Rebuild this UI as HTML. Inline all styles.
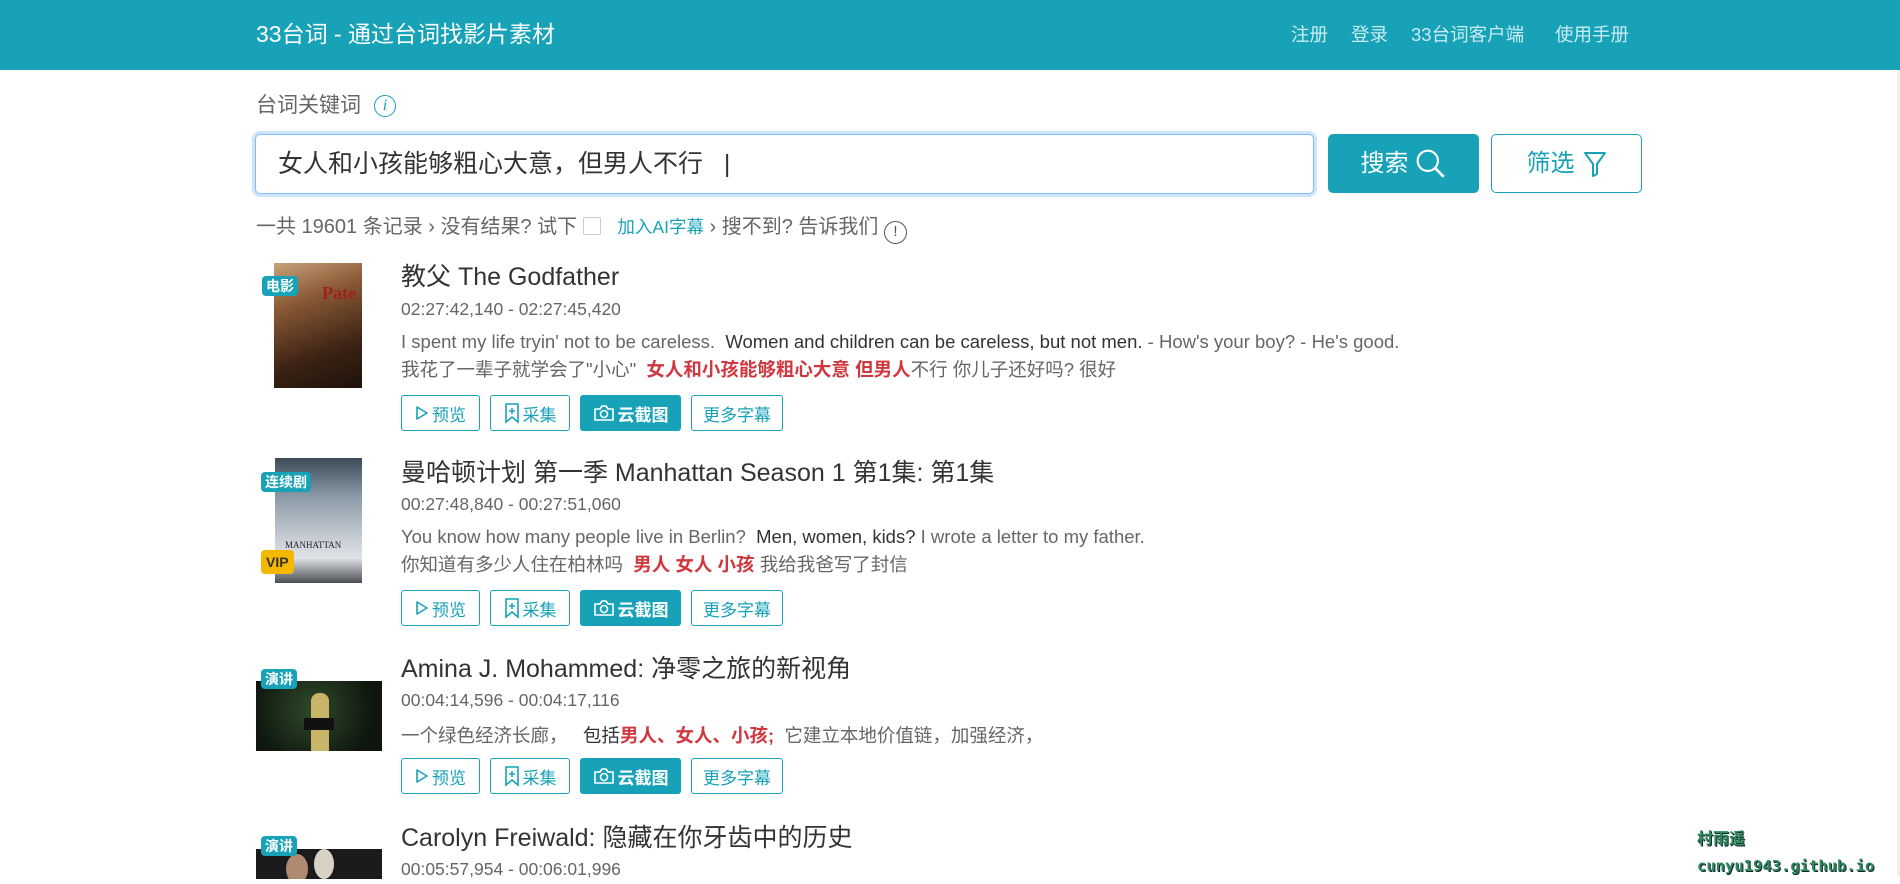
<!DOCTYPE html>
<html><head><meta charset="utf-8"><style>
*{margin:0;padding:0;box-sizing:border-box}
body{width:1900px;height:877px;overflow:hidden;background:#fff;font-family:"Liberation Sans","Noto Sans CJK SC",sans-serif;color:#333;position:relative}
.abs{position:absolute;white-space:nowrap;line-height:30px}
.hdr{position:absolute;left:0;top:0;width:1900px;height:70px;background:#17a2b8}
.nav{top:20px;font-size:18.5px;color:#c8ecf2}
.inp{left:255px;top:134px;width:1059px;height:60px;border:1px solid #80bdff;border-radius:5px;box-shadow:0 0 0 3px #cfe4ff}
.inp span{position:absolute;left:22px;top:14px;font-size:25px;line-height:30px;color:#333}
.btn1{left:1328px;top:134px;width:151px;height:59px;background:#17a2b8;border-radius:5px;color:#fff;font-size:24px;display:flex;align-items:center;justify-content:center;gap:6px}
.btn2{left:1491px;top:134px;width:151px;height:59px;border:1px solid #17a2b8;border-radius:5px;color:#17a2b8;font-size:24px;display:flex;align-items:center;justify-content:center;gap:8px}
.poster{position:absolute;overflow:hidden}
.badge{position:absolute;background:#17a2b8;color:#fff;font-size:14px;font-weight:bold;padding:1px 4px;border-radius:4px;line-height:18px}
.ti{font-size:25px;color:#333}
.tm{font-size:17.5px;color:#666}
.en{font-size:18.5px;color:#666}
.en b{font-weight:normal;color:#333}
.zh{font-size:18.5px;color:#666}
.zh b{color:#d0383f}
.btns{position:absolute;display:flex;gap:10px}
.b{height:36px;border:1px solid #17a2b8;border-radius:3px;color:#17a2b8;font-size:17px;display:flex;align-items:center;justify-content:center;gap:3px}
.b.f{background:#17a2b8;color:#fff;font-weight:bold}
</style></head><body>
<div class="hdr"></div>
<div class="abs" style="left:256px;top:19px;font-size:23px;color:#fff">33台词 - 通过台词找影片素材</div>
<div class="abs nav" style="left:1291px">注册</div>
<div class="abs nav" style="left:1351px">登录</div>
<div class="abs nav" style="left:1411px">33台词客户端</div>
<div class="abs nav" style="left:1555px">使用手册</div>

<div class="abs" style="left:256px;top:91px;font-size:21px;color:#666">台词关键词</div>
<div style="position:absolute;left:374px;top:95px;width:22px;height:22px;border:1.5px solid #17a2b8;border-radius:50%;color:#17a2b8;font-size:16px;font-style:italic;text-align:center;line-height:19px;font-family:'Liberation Serif',serif">i</div>
<div class="abs inp"><span>女人和小孩能够粗心大意，但男人不行<span style="position:static;color:#333">&nbsp;&nbsp;&nbsp;|</span></span></div>
<div class="abs btn1">搜索<svg width="32" height="32" viewBox="0 0 30 30"><circle cx="12" cy="12" r="9.5" fill="none" stroke="#fff" stroke-width="2"/><path d="M19 19l8 8" stroke="#fff" stroke-width="2.5"/></svg></div>
<div class="abs btn2">筛选<svg width="24" height="28" viewBox="0 0 24 28"><path d="M2 3h20l-8 11v10l-4 2V14z" fill="none" stroke="#17a2b8" stroke-width="2" stroke-linejoin="round"/></svg></div>
<div class="abs" style="left:256px;top:212px;font-size:20px;color:#666">一共 19601 条记录 › 没有结果? 试下 <span style="display:inline-block;width:18px;height:18px;border:1px solid #ccc;border-radius:2px;vertical-align:-2px"></span>&nbsp;&nbsp; <span style="color:#17a2b8;font-size:17.5px">加入AI字幕</span> › 搜不到? 告诉我们 <span style="display:inline-block;width:23px;height:23px;border:1.5px solid #555;border-radius:50%;text-align:center;font-size:15px;line-height:20px;color:#555;vertical-align:-3px">!</span></div>

<!-- card 1 -->
<div class="poster" style="left:274px;top:263px;width:88px;height:125px;background:linear-gradient(160deg,#c8a27a 0%,#8a5a35 30%,#3b2214 70%,#1e120b 100%)"><div style="position:absolute;right:6px;top:20px;color:#a0201c;font:bold 18px 'Liberation Serif',serif">Pate</div></div>
<div class="badge" style="left:262px;top:276px">电影</div>
<div class="abs ti" style="left:401px;top:262px">教父 The Godfather</div>
<div class="abs tm" style="left:401px;top:294px">02:27:42,140 - 02:27:45,420</div>
<div class="abs en" style="left:401px;top:327px">I spent my life tryin' not to be careless.&nbsp; <b>Women and children can be careless, but not men.</b> - How's your boy? - He's good.</div>
<div class="abs zh" style="left:401px;top:355px">我花了一辈子就学会了"小心"&nbsp; <b>女人和小孩能够粗心大意 但男人</b>不行 你儿子还好吗? 很好</div>

<!-- card 2 -->
<div class="poster" style="left:275px;top:458px;width:87px;height:125px;background:linear-gradient(180deg,#3d4a58 0%,#8a98a6 30%,#b7c0c8 55%,#dfe3e6 80%,#4a4e52 100%)"><div style="position:absolute;left:10px;top:82px;color:#223;font:9px 'Liberation Serif',serif">MANHATTAN</div></div>
<div class="badge" style="left:261px;top:472px">连续剧</div>
<div class="badge" style="left:261px;top:550px;background:#f5b800;color:#333;padding:3px 5px">VIP</div>
<div class="abs ti" style="left:401px;top:458px">曼哈顿计划 第一季 Manhattan Season 1 第1集: 第1集</div>
<div class="abs tm" style="left:401px;top:489px">00:27:48,840 - 00:27:51,060</div>
<div class="abs en" style="left:401px;top:522px">You know how many people live in Berlin?&nbsp; <b>Men, women, kids?</b> I wrote a letter to my father.</div>
<div class="abs zh" style="left:401px;top:550px">你知道有多少人住在柏林吗&nbsp; <b>男人 女人 小孩</b> 我给我爸写了封信</div>

<!-- card 3 -->
<div class="poster" style="left:256px;top:681px;width:126px;height:70px;background:radial-gradient(circle at 45% 40%,#2f4a2a,#0e160e 75%)"><div style="position:absolute;left:55px;top:12px;width:18px;height:58px;background:#c9b56a;border-radius:8px 8px 0 0"></div><div style="position:absolute;left:48px;top:37px;width:30px;height:12px;background:#111"></div></div>
<div class="badge" style="left:261px;top:669px">演讲</div>
<div class="abs ti" style="left:401px;top:654px">Amina J. Mohammed: 净零之旅的新视角</div>
<div class="abs tm" style="left:401px;top:685px">00:04:14,596 - 00:04:17,116</div>
<div class="abs zh" style="left:401px;top:721px">一个绿色经济长廊，&nbsp;&nbsp; <span style="color:#333">包括<b>男人、女人、小孩</b><b>;</b></span>&nbsp; 它建立本地价值链，加强经济，</div>

<!-- card 4 -->
<div class="poster" style="left:256px;top:849px;width:126px;height:30px;background:#1b1b1b"><div style="position:absolute;left:30px;top:5px;width:22px;height:30px;background:#b08a70;border-radius:50%"></div><div style="position:absolute;left:58px;top:0;width:20px;height:30px;background:#d8d2c4;border-radius:50%"></div></div>
<div class="badge" style="left:261px;top:836px">演讲</div>
<div class="abs ti" style="left:401px;top:823px">Carolyn Freiwald: 隐藏在你牙齿中的历史</div>
<div class="abs tm" style="left:401px;top:854px">00:05:57,954 - 00:06:01,996</div>

<div class="btns" style="left:401px;top:395px"><div class="b" style="width:79px"><svg width="14" height="16" viewBox="0 0 14 16"><path d="M2 2l10 6-10 6z" fill="none" stroke="#17a2b8" stroke-width="1.6" stroke-linejoin="round"/></svg>预览</div><div class="b" style="width:80px"><svg width="16" height="22" viewBox="0 0 16 22"><path d="M2 2h12v18l-6-5-6 5z" fill="none" stroke="#17a2b8" stroke-width="1.6"/><path d="M8 6v6M5 9h6" stroke="#17a2b8" stroke-width="1.5"/></svg>采集</div><div class="b f" style="width:101px"><svg width="22" height="18" viewBox="0 0 22 18"><path d="M2 5h5l2-3h4l2 3h5v11H2z" fill="none" stroke="#fff" stroke-width="1.6" stroke-linejoin="round"/><circle cx="11" cy="10" r="3.5" fill="none" stroke="#fff" stroke-width="1.6"/></svg>云截图</div><div class="b" style="width:92px">更多字幕</div></div>
<div class="btns" style="left:401px;top:590px"><div class="b" style="width:79px"><svg width="14" height="16" viewBox="0 0 14 16"><path d="M2 2l10 6-10 6z" fill="none" stroke="#17a2b8" stroke-width="1.6" stroke-linejoin="round"/></svg>预览</div><div class="b" style="width:80px"><svg width="16" height="22" viewBox="0 0 16 22"><path d="M2 2h12v18l-6-5-6 5z" fill="none" stroke="#17a2b8" stroke-width="1.6"/><path d="M8 6v6M5 9h6" stroke="#17a2b8" stroke-width="1.5"/></svg>采集</div><div class="b f" style="width:101px"><svg width="22" height="18" viewBox="0 0 22 18"><path d="M2 5h5l2-3h4l2 3h5v11H2z" fill="none" stroke="#fff" stroke-width="1.6" stroke-linejoin="round"/><circle cx="11" cy="10" r="3.5" fill="none" stroke="#fff" stroke-width="1.6"/></svg>云截图</div><div class="b" style="width:92px">更多字幕</div></div>
<div class="btns" style="left:401px;top:758px"><div class="b" style="width:79px"><svg width="14" height="16" viewBox="0 0 14 16"><path d="M2 2l10 6-10 6z" fill="none" stroke="#17a2b8" stroke-width="1.6" stroke-linejoin="round"/></svg>预览</div><div class="b" style="width:80px"><svg width="16" height="22" viewBox="0 0 16 22"><path d="M2 2h12v18l-6-5-6 5z" fill="none" stroke="#17a2b8" stroke-width="1.6"/><path d="M8 6v6M5 9h6" stroke="#17a2b8" stroke-width="1.5"/></svg>采集</div><div class="b f" style="width:101px"><svg width="22" height="18" viewBox="0 0 22 18"><path d="M2 5h5l2-3h4l2 3h5v11H2z" fill="none" stroke="#fff" stroke-width="1.6" stroke-linejoin="round"/><circle cx="11" cy="10" r="3.5" fill="none" stroke="#fff" stroke-width="1.6"/></svg>云截图</div><div class="b" style="width:92px">更多字幕</div></div>

<div class="abs" style="left:1697px;top:825px;font-size:16px;font-weight:bold;color:#2f8a5a;text-shadow:1px 1px 0 #123">村雨遥</div>
<div class="abs" style="left:1697px;top:851px;font-size:15.5px;font-weight:bold;color:#2f8a5a;font-family:'DejaVu Sans Mono',monospace;text-shadow:1px 1px 0 #123">cunyu1943.github.io</div>
<div style="position:absolute;left:1897px;top:70px;width:3px;height:807px;background:#eee"></div>
</body></html>
